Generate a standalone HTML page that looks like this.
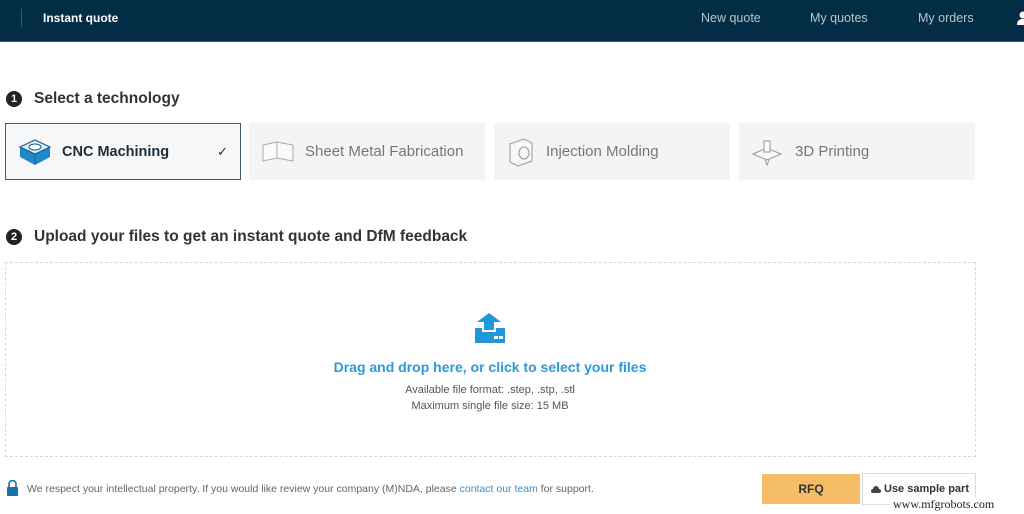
<!DOCTYPE html>
<html><head><meta charset="utf-8"><style>
*{margin:0;padding:0;box-sizing:border-box}
body{width:1024px;height:514px;overflow:hidden;background:#fff;font-family:"Liberation Sans",sans-serif;position:relative;color:#333}
.hdr{position:absolute;left:0;top:0;width:1024px;height:42px;background:#022d45;border-bottom:1px solid #3d5a6c}
.hdr .sep{position:absolute;left:21px;top:9px;width:1px;height:18px;background:#3d5a6c}
.hdr span{position:absolute;top:11px;font-size:12.5px;color:#b8c4cc}
.h2{position:absolute;left:6px;font-size:15.5px;font-weight:bold;color:#333;display:flex;align-items:center}
.h2 i{display:inline-block;width:16px;height:16px;border-radius:50%;background:#222;color:#fff;font-size:11px;font-style:normal;text-align:center;line-height:16px;margin-right:12px}
.card{position:absolute;top:123px;height:57px;background:#f4f4f4;font-size:15px;color:#777;display:flex;align-items:center}
.card svg{margin-left:12px;margin-right:10px}
.drop{position:absolute;left:5px;top:262px;width:971px;height:195px;border:1px dashed #d8d8d8}
</style></head><body>
<div class="hdr"><div class="sep"></div>
<span style="left:43px;color:#fff;font-weight:bold;font-size:12px">Instant quote</span>
<span style="left:701px">New quote</span><span style="left:810px">My quotes</span><span style="left:918px">My orders</span>
<svg style="position:absolute;left:1017px;top:11px" width="10" height="14"><circle cx="6" cy="4" r="3.5" fill="#fff"/><path d="M0 14 Q0 8 6 8 Q12 8 12 14Z" fill="#fff"/></svg>
</div>
<div class="h2" style="top:90px"><i>1</i>Select a technology</div>
<div class="card" style="left:5px;width:236px;background:#f5f7f9;border:1px solid #44596a;color:#1d2d3a;font-weight:bold">
<svg width="34" height="30" viewBox="0 0 34 30"><path d="M2 10 L17 3 L32 10 L32 20 L17 28 L2 20Z" fill="#1e88c8"/><path d="M2 10 L17 3 L32 10 L17 17Z" fill="#d9eef9" stroke="#1e5f8a" stroke-width="1.2"/><ellipse cx="17" cy="10" rx="6" ry="3" fill="#fff" stroke="#1e5f8a"/><path d="M17 17 L17 28" stroke="#156a9e"/></svg>
<span style="font-size:14.5px">CNC Machining</span><span style="position:absolute;right:12px;font-weight:normal;font-size:13px">✓</span></div>
<div class="card" style="left:249px;width:236px"><svg width="34" height="26"><path d="M2 6 L16 3 L32 6 L32 22 L16 19 L2 22Z" fill="#fafafa" stroke="#aaa"/><path d="M16 3 L16 19" stroke="#aaa"/></svg>Sheet Metal Fabrication</div>
<div class="card" style="left:494px;width:236px"><svg width="30" height="32"><path d="M4 8 L18 3 L26 7 L26 25 L12 30 L4 26Z" fill="#f8f8f8" stroke="#999"/><ellipse cx="18" cy="17" rx="5" ry="6" fill="none" stroke="#999"/></svg>Injection Molding</div>
<div class="card" style="left:739px;width:236px"><svg width="34" height="30"><path d="M2 17 L16 11 L30 17 L16 23Z" fill="#f8f8f8" stroke="#999"/><rect x="13" y="4" width="6" height="11" fill="#fafafa" stroke="#999"/><path d="M14 23 L16 28 L18 23" fill="none" stroke="#999"/></svg>3D Printing</div>
<div class="h2" style="top:228px"><i>2</i>Upload your files to get an instant quote and DfM feedback</div>
<div class="drop"></div>
<svg style="position:absolute;left:474px;top:313px" width="32" height="31"><path d="M10 17 L10 9 L3 9 L15 0 L27 9 L20 9 L20 17Z" fill="#2196d8"/><path d="M1 15 L8 15 L8 19 L22 19 L22 15 L31 15 L31 30 L1 30Z" fill="#2196d8"/><rect x="20" y="23" width="4" height="3" fill="#fff"/><rect x="25" y="23" width="4" height="3" fill="#fff"/></svg>
<div style="position:absolute;left:0;width:980px;top:359px;text-align:center;color:#2a9ad8;font-size:14px;font-weight:bold">Drag and drop here, or click to select your files</div>
<div style="position:absolute;left:0;width:980px;top:382px;text-align:center;color:#555;font-size:11px;line-height:16px">Available file format: .step, .stp, .stl<br>Maximum single file size: 15 MB</div>
<svg style="position:absolute;left:6px;top:480px" width="13" height="16"><path d="M3 7 V4 a3.5 3.5 0 0 1 7 0 V7" fill="none" stroke="#1a6fa8" stroke-width="1.6"/><rect x="1" y="7" width="11" height="9" rx="1" fill="#1a6fa8"/></svg>
<div style="position:absolute;left:27px;top:483px;font-size:10.5px;color:#666;white-space:nowrap">We respect your intellectual property. If you would like review your company (M)NDA, please <span style="color:#3a8fc8">contact our team</span> for support.</div>
<div style="position:absolute;left:762px;top:474px;width:98px;height:30px;background:#f5bd68;color:#333;font-size:12px;font-weight:bold;text-align:center;line-height:30px">RFQ</div>
<div style="position:absolute;left:862px;top:473px;width:114px;height:32px;border:1px solid #ddd;background:#fff;font-size:11px;font-weight:bold;color:#333;line-height:30px;padding-left:21px;white-space:nowrap">Use sample part<svg style="position:absolute;left:8px;top:11px" width="10" height="8"><path d="M2 8 a2 2 0 0 1 0-4 a3 3 0 0 1 6 0 a2 2 0 0 1 0 4Z" fill="#444"/></svg></div>
<div style="position:absolute;left:890px;top:497px;font-family:'Liberation Serif',serif;font-size:12px;color:#222;background:#fff;padding:0 3px;white-space:nowrap">www.mfgrobots.com</div>
</body></html>
